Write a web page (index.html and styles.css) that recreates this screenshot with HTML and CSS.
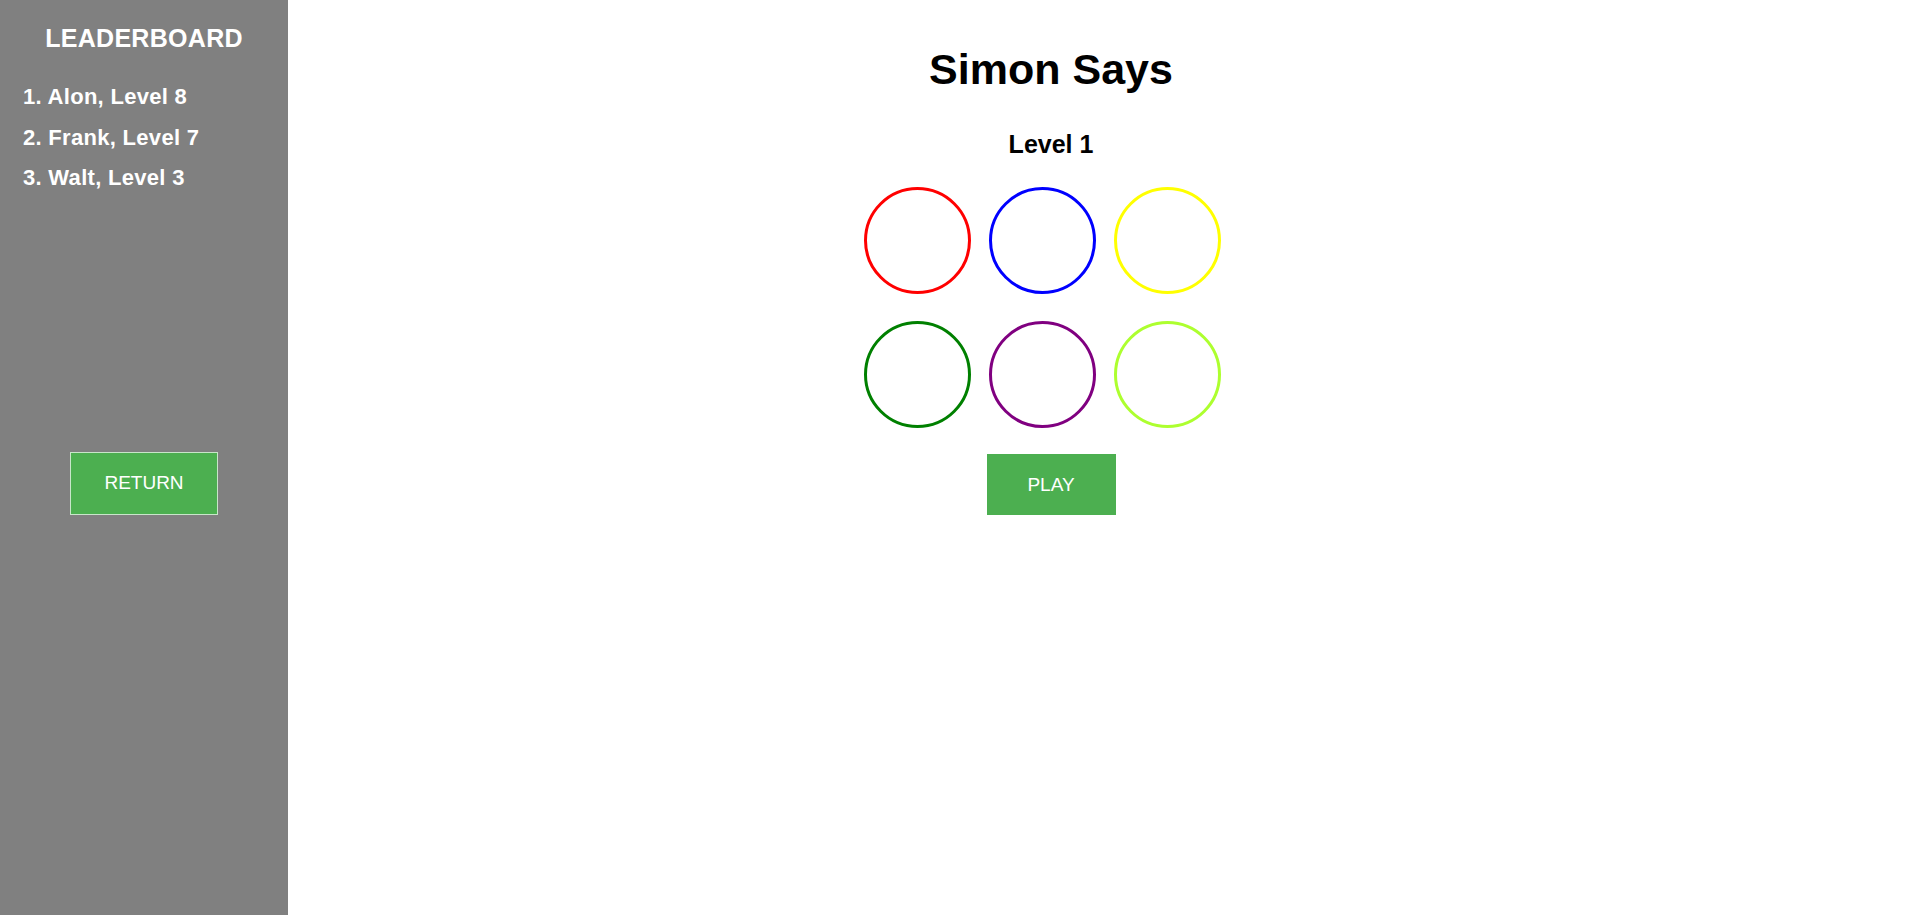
FILE: index.html
```html
<!DOCTYPE html>
<html lang="en">
<head>
<meta charset="utf-8">
<title>Simon Says</title>
<link rel="stylesheet" href="styles.css">
</head>
<body>
<div class="page">
  <aside class="sidebar">
    <h2 class="board-title">LEADERBOARD</h2>
    <ol class="board-list">
      <li>1. Alon, Level 8</li>
      <li>2. Frank, Level 7</li>
      <li>3. Walt, Level 3</li>
    </ol>
    <button class="btn btn-return">RETURN</button>
  </aside>
  <main class="main">
    <h1 class="title">Simon Says</h1>
    <h2 class="level">Level 1</h2>
    <div class="pads">
      <div class="pad pad-red"></div>
      <div class="pad pad-blue"></div>
      <div class="pad pad-yellow"></div>
      <div class="pad pad-green"></div>
      <div class="pad pad-purple"></div>
      <div class="pad pad-lime"></div>
    </div>
    <button class="btn btn-play">PLAY</button>
  </main>
</div>
</body>
</html>
```
FILE: styles.css
```css
html, body {
  margin: 0;
  padding: 0;
  height: 100%;
  background: #ffffff;
  font-family: "Liberation Sans", Arial, sans-serif;
}

.page {
  display: flex;
  height: 100vh;
}

.sidebar {
  width: 288px;
  flex: 0 0 288px;
  background: #808080;
  color: #ffffff;
  display: flex;
  flex-direction: column;
  align-items: stretch;
  padding-top: 24px;
  box-sizing: border-box;
}

.board-title {
  margin: 0;
  font-size: 25px;
  line-height: 28px;
  font-weight: bold;
  letter-spacing: 0.3px;
  text-align: center;
}

.board-list {
  list-style: none;
  margin: 25px 0 0 0;
  padding: 0 0 0 23px;
}

.board-list li {
  font-size: 22px;
  font-weight: bold;
  line-height: 40.5px;
  letter-spacing: 0.3px;
}

.btn {
  font-family: "Liberation Sans", Arial, sans-serif;
  font-size: 19px;
  color: #ffffff;
  background: #4caf50;
  cursor: pointer;
  box-sizing: border-box;
  padding: 0;
}

.btn-return {
  align-self: center;
  margin-top: 253px;
  width: 148px;
  height: 63px;
  border: 1px solid #c8e6c9;
}

.main {
  flex: 1;
  display: flex;
  flex-direction: column;
  align-items: center;
  padding: 45px 106px 0 0;
  color: #000000;
}

.title {
  margin: 0;
  font-size: 43px;
  line-height: 48px;
  font-weight: bold;
}

.level {
  margin: 37px 0 0 0;
  font-size: 25px;
  line-height: 28px;
  font-weight: bold;
}

.pads {
  display: flex;
  flex-wrap: wrap;
  width: 375px;
  margin: 29px 0 -1px 0;
}

.pad {
  width: 107px;
  height: 107px;
  box-sizing: border-box;
  border: 3px solid;
  border-radius: 50%;
  margin: 0 18px 27px 0;
}

.pad-red { border-color: #ff0000; }
.pad-blue { border-color: #0000ff; }
.pad-yellow { border-color: #ffff00; }
.pad-green { border-color: #008000; }
.pad-purple { border-color: #800080; }
.pad-lime { border-color: #adff2f; }

.btn-play {
  width: 129px;
  height: 61px;
  border: none;
}
```
